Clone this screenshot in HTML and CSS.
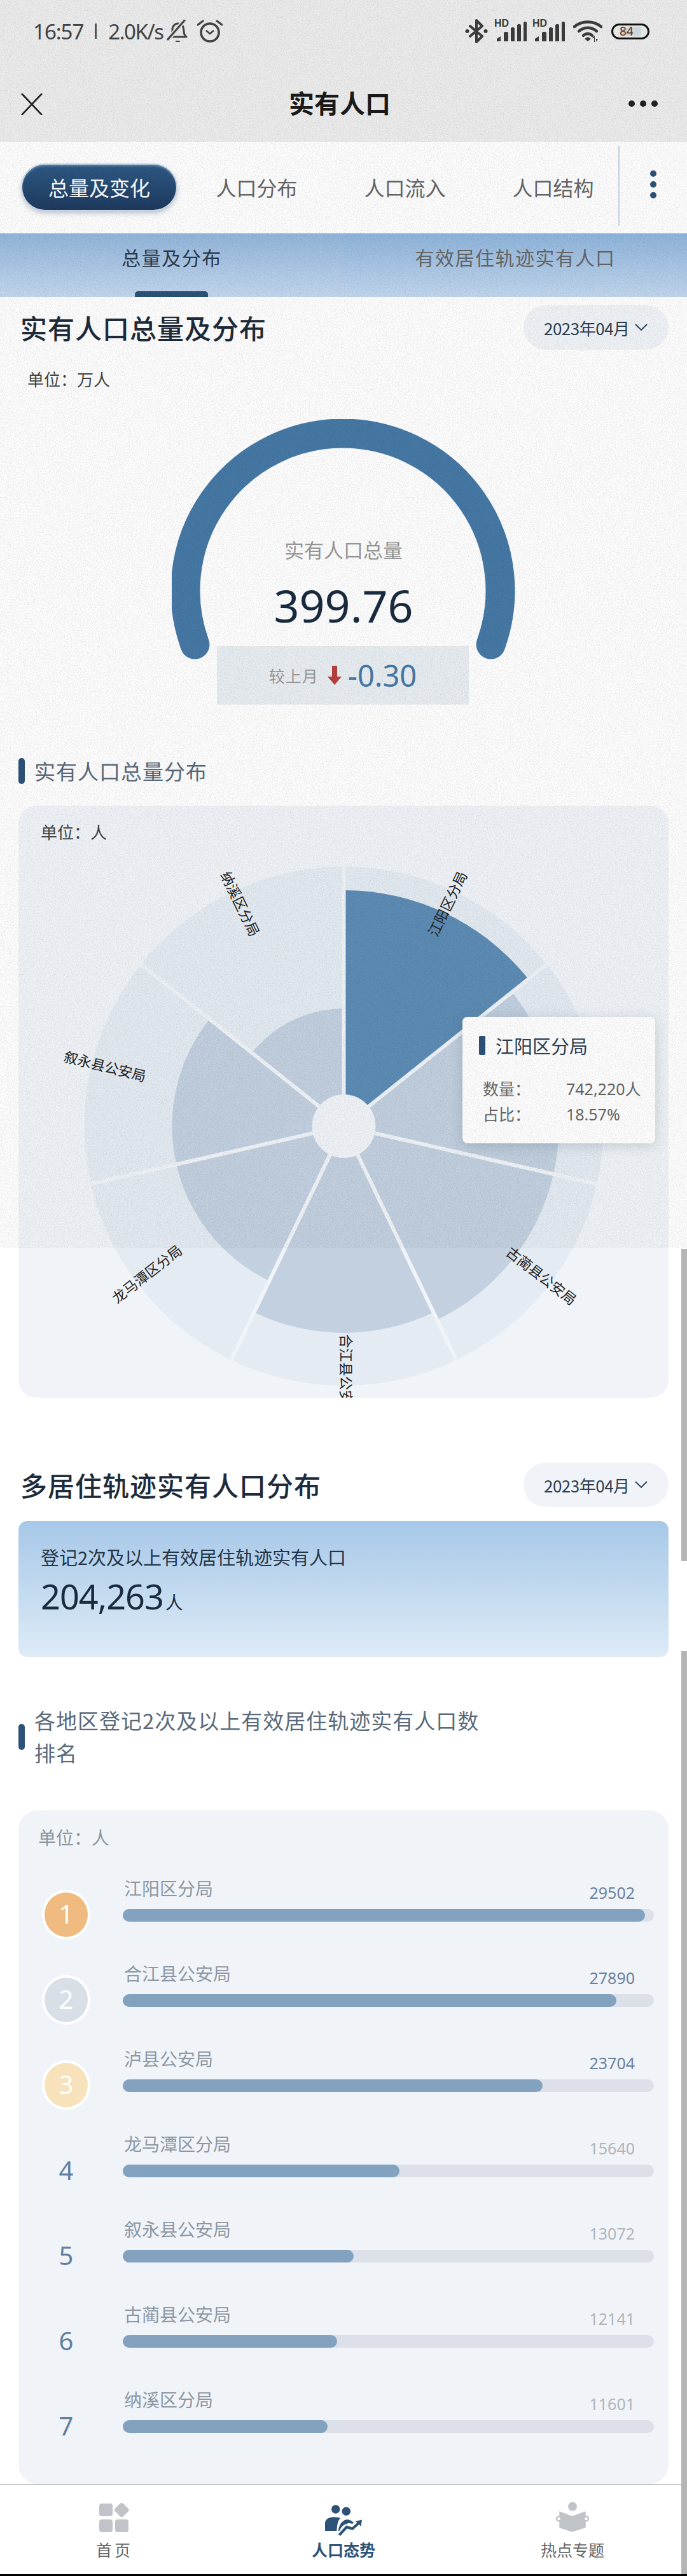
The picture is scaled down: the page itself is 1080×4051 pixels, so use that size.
FILE: index.html
```html
<!DOCTYPE html>
<html lang="zh-CN">
<head>
<meta charset="UTF-8" />
<meta name="viewport" content="width=device-width, initial-scale=1" />
<title>实有人口</title>
<link rel="stylesheet" href="styles.css">
</head>
<body>
  <div class="page">
    <div class="top-bar">
      <div class="status">
        <div class="status-left">
          <span class="status-time">16:57</span>
          <span class="status-sep"></span>
          <span class="status-speed">2.0K/s</span>
          <svg class="ic-bell" viewBox="0 0 34 36"><path d="M6 27c3-3 3-6 3-11 0-6 4-10 9-10 4 0 7 2 8 6l1 5c0 5 1 8 4 10z" fill="none" stroke="#444" stroke-width="3" stroke-linejoin="round"/><path d="M2 31 L28 1" stroke="#e6e6e6" stroke-width="7"/><path d="M1 32 L29 0" stroke="#444" stroke-width="3"/><path d="M13 33h9l-2 2h-5z" fill="#444"/></svg>
          <svg class="ic-alarm" viewBox="0 0 40 36"><circle cx="20" cy="20" r="14" fill="none" stroke="#444" stroke-width="3.6"/><path d="M14 17l6 5 6-5" fill="none" stroke="#444" stroke-width="2.6"/><path d="M1 8 L9 2 M39 8 L31 2" stroke="#444" stroke-width="3.2" stroke-linecap="round"/></svg>
        </div>
        <div class="status-right">
          <svg class="ic-bt" viewBox="0 0 36 38"><path d="M8 11 L27 27 L18 36 V2 L27 11 L8 27" fill="none" stroke="#3c3c3c" stroke-width="4" stroke-linejoin="round" stroke-linecap="round"/><circle cx="3.500" cy="19" r="3" fill="#3c3c3c"/><circle cx="32.500" cy="19" r="3" fill="#3c3c3c"/></svg>
          <div class="signal">
            <span class="signal-hd">HD</span>
            <svg class="signal-bars" viewBox="0 0 48 32"><path d="M1 31v-4l6-4v8zM12 31V18c0-1 1-2 2-2h3c1 0 2 1 2 2v13zM23 31V11c0-1 1-2 2-2h2c1 0 2 1 2 2v20zM33 31V6c0-1 1-2 2-2h2c1 0 2 1 2 2v25zM43 31V2c0-1 1-2 2-2h1c1 0 2 1 2 2v29z" fill="#3c3c3c"/></svg>
          </div>
          <div class="signal">
            <span class="signal-hd">HD</span>
            <svg class="signal-bars" viewBox="0 0 48 32"><path d="M1 31v-4l6-4v8zM12 31V18c0-1 1-2 2-2h3c1 0 2 1 2 2v13zM23 31V11c0-1 1-2 2-2h2c1 0 2 1 2 2v20zM33 31V6c0-1 1-2 2-2h2c1 0 2 1 2 2v25zM43 31V2c0-1 1-2 2-2h1c1 0 2 1 2 2v29z" fill="#3c3c3c"/></svg>
          </div>
          <svg class="ic-wifi" viewBox="0 0 46 36"><path d="M2 11C14 1 32 1 44 11" fill="none" stroke="#3c3c3c" stroke-width="4.500" stroke-linecap="round"/><path d="M9 18C17 11 29 11 37 18" fill="none" stroke="#3c3c3c" stroke-width="4.500" stroke-linecap="round"/><path d="M16 25C20 21 26 21 30 25" fill="none" stroke="#3c3c3c" stroke-width="4.500" stroke-linecap="round"/><path d="M18 30l5-3 5 3-5 4z" fill="#3c3c3c"/><path d="M33 35v-6h-3l4-4v10zM36 24v6h3l-3 5z M38 24v11" fill="#3c3c3c"/></svg>
          <div class="battery"><span class="battery-fill">84</span></div>
        </div>
      </div>
      <div class="title-bar">
        <svg class="ic-close" viewBox="0 0 34 34"><path d="M1 0 L33 34 M33 0 L1 34" stroke="#222" stroke-width="2.600"/></svg>
        <h1 class="page-title">实有人口</h1>
        <div class="more-dots"><i></i><i></i><i></i></div>
      </div>
    </div>

    <nav class="main-tabs">
      <a class="main-tab active">总量及变化</a>
      <a class="main-tab">人口分布</a>
      <a class="main-tab">人口流入</a>
      <a class="main-tab">人口结构</a>
      <div class="main-tabs-more"><i></i><i></i><i></i></div>
    </nav>

    <div class="sub-tabs">
      <div class="sub-tab active">总量及分布</div>
      <div class="sub-tab">有效居住轨迹实有人口</div>
    </div>

    <section class="section-one">
      <div class="section-head">
        <h2>实有人口总量及分布</h2>
        <div class="date-pill">2023年04月<svg viewBox="0 0 20 12"><path d="M1 1l9 9 9-9" fill="none" stroke="#2c3e50" stroke-width="1.800"/></svg></div>
      </div>
      <div class="unit-line">单位：万人</div>

      <div class="gauge">
        <svg class="gauge-arc" viewBox="0 0 540 380"><path d="M36.400 354.600 A247.500 247.500 0 1 1 501.600 354.600" fill="none" stroke="#4679a6" stroke-width="46" stroke-linecap="round"/></svg>
        <div class="gauge-label">实有人口总量</div>
        <div class="gauge-value">399.76</div>
        <div class="gauge-compare">
          <span class="compare-label">较上月</span>
          <svg class="compare-arrow" viewBox="0 0 22 30"><path d="M7 0h8v17h7L11 30 0 17h7z" fill="#b9403f"/></svg>
          <span class="compare-value">-0.30</span>
        </div>
      </div>

      <div class="sub-head"><i></i><span>实有人口总量分布</span></div>

      <div class="rose-card">
        <div class="rose-unit">单位：人</div>
        <svg class="rose" viewBox="0 0 1022 931">
          <g transform="translate(511.500 504)">
            <circle r="408" fill="#e4ebf2"/>
            <path d="M0 0V-371A371 371 0 0 1 290.100 -231.300Z" fill="#5d8cb5"/>
            <path d="M0 0L264.300 -210.700A338 338 0 0 1 329.500 75.200Z" fill="#c2d0e0"/>
            <path d="M0 0L329.500 75.200A338 338 0 0 1 146.700 304.500Z" fill="#c2d0e0"/>
            <path d="M0 0L141 292.800A325 325 0 0 1 -141 292.800Z" fill="#c2d0e0"/>
            <path d="M0 0L-117.100 243.300A270 270 0 0 1 -263.200 60.100Z" fill="#c2d0e0"/>
            <path d="M0 0L-263.200 60.100A270 270 0 0 1 -211.100 -168.300Z" fill="#c2d0e0"/>
            <path d="M0 0L-144.600 -115.300A185 185 0 0 1 0 -185Z" fill="#c2d0e0"/>
            <g stroke="#f0f4f8" stroke-width="6">
              <path d="M0 0L0 -408"/>
              <path d="M0 0L319 -254.400"/>
              <path d="M0 0L397.800 90.800"/>
              <path d="M0 0L177 367.600"/>
              <path d="M0 0L-177 367.600"/>
              <path d="M0 0L-397.800 90.800"/>
              <path d="M0 0L-319 -254.400"/>
            </g>
            <circle r="50" fill="#f0f4f8"/>
          </g>
          <g class="rose-labels" text-anchor="middle">
            <text transform="translate(682 158) rotate(-64)">江阳区分局</text>
            <text transform="translate(341 158) rotate(64)">纳溪区分局</text>
            <text transform="translate(134 418) rotate(14)">叙永县公安局</text>
            <text transform="translate(207 743) rotate(-38)">龙马潭区分局</text>
            <text transform="translate(817 746) rotate(38)">古蔺县公安局</text>
            <text transform="translate(507 897) rotate(90)">合江县公安局</text>
          </g>
        </svg>
        <div class="rose-tip">
          <div class="tip-title"><i></i>江阳区分局</div>
          <div class="tip-row"><span>数量：</span><span>742,220人</span></div>
          <div class="tip-row"><span>占比：</span><span>18.57%</span></div>
        </div>
      </div>
    </section>

    <section class="section-two">
      <div class="section-head">
        <h2>多居住轨迹实有人口分布</h2>
        <div class="date-pill">2023年04月<svg viewBox="0 0 20 12"><path d="M1 1l9 9 9-9" fill="none" stroke="#2c3e50" stroke-width="1.800"/></svg></div>
      </div>
      <div class="total-card">
        <div class="total-label">登记2次及以上有效居住轨迹实有人口</div>
        <div class="total-value">204,263<span>人</span></div>
      </div>

      <div class="sub-head sub-head-wrap"><i></i><span>各地区登记2次及以上有效居住轨迹实有人口数排名</span></div>

      <div class="rank-card">
        <div class="rank-unit">单位：人</div>
        <div class="rank-row">
          <div class="rank-badge gold">1</div>
          <div class="rank-main">
            <div class="rank-text"><span>江阳区分局</span><b class="top">29502</b></div>
            <div class="rank-track"><div class="rank-fill" style="width:98.3%"></div></div>
          </div>
        </div>
        <div class="rank-row">
          <div class="rank-badge silver">2</div>
          <div class="rank-main">
            <div class="rank-text"><span>合江县公安局</span><b class="top">27890</b></div>
            <div class="rank-track"><div class="rank-fill" style="width:92.9%"></div></div>
          </div>
        </div>
        <div class="rank-row">
          <div class="rank-badge bronze">3</div>
          <div class="rank-main">
            <div class="rank-text"><span>泸县公安局</span><b class="top">23704</b></div>
            <div class="rank-track"><div class="rank-fill" style="width:79%"></div></div>
          </div>
        </div>
        <div class="rank-row">
          <div class="rank-badge">4</div>
          <div class="rank-main">
            <div class="rank-text"><span>龙马潭区分局</span><b>15640</b></div>
            <div class="rank-track"><div class="rank-fill" style="width:52.1%"></div></div>
          </div>
        </div>
        <div class="rank-row">
          <div class="rank-badge">5</div>
          <div class="rank-main">
            <div class="rank-text"><span>叙永县公安局</span><b>13072</b></div>
            <div class="rank-track"><div class="rank-fill" style="width:43.5%"></div></div>
          </div>
        </div>
        <div class="rank-row">
          <div class="rank-badge">6</div>
          <div class="rank-main">
            <div class="rank-text"><span>古蔺县公安局</span><b>12141</b></div>
            <div class="rank-track"><div class="rank-fill" style="width:40.4%"></div></div>
          </div>
        </div>
        <div class="rank-row">
          <div class="rank-badge">7</div>
          <div class="rank-main">
            <div class="rank-text"><span>纳溪区分局</span><b>11601</b></div>
            <div class="rank-track"><div class="rank-fill" style="width:38.6%"></div></div>
          </div>
        </div>
      </div>
    </section>

    <footer class="bottom-nav">
      <div class="nav-item">
        <svg viewBox="0 0 50 50"><g fill="#c0c4c9"><rect x="1" y="2" width="21" height="20" rx="4"/><rect x="27.300" y="3.200" width="18" height="18" rx="4" transform="rotate(45 36.300 12.200)"/><rect x="1" y="27" width="21" height="20" rx="4"/><rect x="26" y="27" width="21" height="20" rx="4"/></g></svg>
        <span>首页</span>
      </div>
      <div class="nav-item active">
        <svg viewBox="0 0 60 50"><g fill="#2c5278"><circle cx="17.700" cy="11" r="6.700"/><circle cx="34.300" cy="14.300" r="6.700"/><path d="M1 45V33C1 27 7 23.300 15 23.300C19 23.300 23 24 25 25C21 29 20 36 19.300 45Z"/><path d="M21.700 45C23 38 25 33 28.300 30.700C31 28 34 27 36.700 27.300C40 27.500 43 29.500 46 32L44 34C41 33 39 32.800 36.700 33.300C33 34.300 30 36 28 38C26 40.500 24.500 43 23.500 45Z"/><path d="M23.300 51.700L35 39L44 41.700L53.300 33.300" fill="none" stroke="#2c5278" stroke-width="4.200"/><path d="M49 30L59 27.500L57.500 38Z"/></g></svg>
        <span>人口态势</span>
      </div>
      <div class="nav-item">
        <svg viewBox="0 0 50 50"><g fill="#c0c4c9"><circle cx="25" cy="6.700" r="7"/><path d="M4.300 14.300L24.300 21.700L45.700 14.300V40L24.300 46.700L4.300 40Z"/></g><circle cx="3.500" cy="26" r="3.500" fill="#fff" stroke="#c0c4c9" stroke-width="2.500"/><circle cx="46.500" cy="26" r="3.500" fill="#fff" stroke="#c0c4c9" stroke-width="2.500"/></svg>
        <span>热点专题</span>
      </div>
    </footer>

    <!-- stitched screenshot: upper part is grainy and tinted, scrollbar pieces on the edge -->
    <svg class="tint" width="1080" height="1963">
      <filter id="grain" x="0" y="0" width="100%" height="100%">
        <feTurbulence type="fractalNoise" baseFrequency="0.8" numOctaves="2" seed="4"/>
        <feColorMatrix values="0 0 0 0 0  0 0 0 0 0  0 0 0 0 0  0.22 0 0 0 -0.08"/>
      </filter>
      <rect width="1080" height="1963" filter="url(#grain)"/>
    </svg>
    <div class="scroll-thumb thumb-a"></div>
    <div class="scroll-thumb thumb-b"></div>
    <div class="bottom-edge"></div>
  </div>
</body>
</html>
```
FILE: styles.css
```css
/* Reset & base */
* {
  box-sizing: border-box;
}
html, body {
  margin: 0;
  padding: 0;
  background: #fff;
}
body {
  font-family: "Noto Sans CJK SC", "Noto Sans", sans-serif;
  color: #333;
}
h1, h2 {
  margin: 0;
}

.page {
  position: relative;
  width: 1080px;
  height: 4051px;
  overflow: hidden;
  background: #fff;
}

/* Status + title */
.top-bar {
  height: 223px;
  background: #ededed;
}
.status {
  height: 100px;
  padding: 30px 59px 0 52px;
  display: flex;
  justify-content: space-between;
  align-items: flex-start;
}
.status-left,
.status-right {
  display: flex;
  align-items: center;
  height: 38px;
}
.status-time,
.status-speed {
  font-family: "Noto Sans", sans-serif;
  font-size: 33px;
  color: #444;
  letter-spacing: -1px;
}
.status-speed {
  letter-spacing: -1.5px;
}
.status-sep {
  width: 3px;
  height: 24px;
  margin: 0 18px;
  background: #555;
}
.ic-bell {
  width: 34px;
  height: 36px;
  margin-left: 6px;
}
.ic-alarm {
  width: 40px;
  height: 36px;
  margin-left: 14px;
}
.ic-bt {
  width: 36px;
  height: 38px;
}
.signal {
  position: relative;
  width: 50px;
  height: 34px;
  margin-left: 11px;
}
.signal + .signal {
  margin-left: 10px;
}
.signal-hd {
  position: absolute;
  left: -1px;
  top: -2px;
  font: 700 16px/14px "Liberation Sans", sans-serif;
  color: #3c3c3c;
}
.signal-bars {
  position: absolute;
  right: 0;
  bottom: 0;
  width: 48px;
  height: 32px;
}
.ic-wifi {
  width: 46px;
  height: 36px;
  margin-left: 13px;
}
.battery {
  width: 60px;
  height: 25px;
  margin-left: 14px;
  padding: 3px 10px;
  border: 3px solid #111;
  border-radius: 13px;
}
.battery-fill {
  display: block;
  height: 13px;
  font: 19px/13px "Noto Sans", sans-serif;
  color: #443;
  text-align: left;
  background: linear-gradient(90deg, #e8cfd4, #dcd8dc 60%, #c9e2ea);
}

.title-bar {
  position: relative;
  height: 123px;
  padding: 0 46px 0 33px;
  display: flex;
  align-items: flex-start;
  justify-content: space-between;
}
.ic-close {
  width: 34px;
  height: 34px;
  margin-top: 47px;
}
.page-title {
  position: absolute;
  left: 0;
  right: 12px;
  top: 36px;
  text-align: center;
  font-size: 40px;
  line-height: 50px;
  font-weight: 700;
  color: #1a1a1a;
}
.more-dots {
  display: flex;
  gap: 8px;
  margin-top: 58px;
}
.more-dots i {
  width: 10px;
  height: 10px;
  border-radius: 50%;
  background: #222;
}

/* Main tabs */
.main-tabs {
  position: relative;
  height: 144px;
  padding: 36px 0 0 35px;
  display: flex;
  background: #fff;
}
.main-tab {
  width: 233px;
  height: 71px;
  text-align: center;
  font-size: 32px;
  line-height: 70px;
  color: #666;
}
.main-tab:nth-child(2) {
  margin-left: 10px;
}
.main-tab.active {
  width: 242px;
  border-radius: 36px;
  color: #fff;
  background: linear-gradient(180deg, #2f5a85, #1e3a60);
  box-shadow: inset 0 3px 2px rgba(110, 160, 205, 0.45), 0 0 0 2px #cfdbe6, 0 4px 10px rgba(44, 82, 120, 0.4);
}
.main-tabs-more {
  position: absolute;
  top: 7px;
  left: 972px;
  width: 108px;
  height: 125px;
  padding-top: 38px;
  border-left: 2px solid #c9d8e8;
  display: flex;
  flex-direction: column;
  align-items: center;
  gap: 7px;
}
.main-tabs-more i {
  width: 10px;
  height: 10px;
  border-radius: 50%;
  background: #2c5278;
}

/* Sub tabs */
.sub-tabs {
  height: 100px;
  display: flex;
  background: linear-gradient(180deg, #8fb5dd, #c2d8ef);
}
.sub-tab {
  position: relative;
  width: 540px;
  padding-top: 15px;
  text-align: center;
  font-size: 30px;
  line-height: 44px;
  letter-spacing: 1.5px;
  color: #666;
}
.sub-tab.active {
  color: #2a3a4c;
  background: linear-gradient(180deg, #93b6dc, #c4d9ef);
}
.sub-tab.active::after {
  content: "";
  position: absolute;
  left: 212px;
  bottom: 0;
  width: 115px;
  height: 9px;
  border-radius: 5px 5px 0 0;
  background: #2c5278;
}

/* Sections */
.section-one {
  height: 1833px;
  padding: 13px 29px 0;
}
.section-two {
  padding: 0 29px;
}
.section-head {
  display: flex;
  justify-content: space-between;
  align-items: center;
  height: 70px;
}
.section-head h2 {
  padding-left: 3px;
  font-size: 42px;
  line-height: 50px;
  font-weight: 500;
  letter-spacing: 1px;
  color: #1e2b3a;
}
.date-pill {
  display: flex;
  align-items: center;
  gap: 8px;
  width: 228px;
  height: 70px;
  padding-left: 32px;
  border-radius: 35px;
  font-size: 26px;
  letter-spacing: -0.5px;
  color: #2c3e50;
  background: #f0f4f8;
}
.date-pill svg {
  width: 20px;
  height: 12px;
}
.unit-line {
  margin: 28px 0 0 14px;
  font-size: 26px;
  line-height: 36px;
  color: #444;
}

/* Gauge */
.gauge {
  position: relative;
  height: 533px;
  margin: 45px auto 0;
  width: 540px;
}
.gauge-arc {
  position: absolute;
  left: 0;
  top: 0;
  width: 540px;
  height: 380px;
}
.gauge-label {
  position: relative;
  padding-top: 183px;
  text-align: center;
  font-size: 31px;
  line-height: 44px;
  color: #999;
}
.gauge-value {
  position: relative;
  margin-top: 26px;
  text-align: center;
  font-family: "Noto Sans", sans-serif;
  font-size: 70px;
  line-height: 80px;
  color: #1a2b3f;
}
.gauge-compare {
  position: absolute;
  left: 71px;
  top: 357px;
  width: 396px;
  height: 92px;
  display: flex;
  align-items: center;
  justify-content: center;
  background: #e9eef3;
}
.compare-label {
  font-size: 25px;
  letter-spacing: 1px;
  color: #999;
}
.compare-arrow {
  width: 22px;
  height: 30px;
  margin: 0 10px 0 14px;
}
.compare-value {
  font-family: "Noto Sans", sans-serif;
  font-size: 47px;
  line-height: 60px;
  color: #4679a6;
}

/* Section sub heading */
.sub-head {
  display: flex;
  align-items: center;
  gap: 15px;
  height: 41px;
}
.sub-head i {
  flex: none;
  width: 10px;
  height: 41px;
  border-radius: 5px;
  background: #2c5278;
}
.sub-head span {
  font-size: 33px;
  line-height: 51px;
  letter-spacing: 1px;
  color: #5a6a7a;
}
.sub-head-wrap {
  height: 102px;
  margin-top: 74px;
}
.sub-head-wrap span {
  width: 715px;
}

/* Rose chart */
.rose-card {
  position: relative;
  height: 931px;
  margin-top: 34px;
  overflow: hidden;
  border-radius: 28px;
  background: #f0f4f8;
}
.rose-unit {
  position: absolute;
  left: 35px;
  top: 23px;
  font-size: 26px;
  line-height: 36px;
  color: #444;
}
.rose {
  display: block;
  width: 1022px;
  height: 931px;
}
.rose-labels {
  font-size: 22px;
  fill: #222;
}
.rose-tip {
  position: absolute;
  left: 698px;
  top: 332px;
  width: 303px;
  height: 199px;
  padding: 27px 10px 0 26px;
  border-radius: 8px;
  background: #fff;
  box-shadow: 0 4px 20px rgba(60, 80, 100, 0.22);
}
.tip-title {
  display: flex;
  align-items: center;
  gap: 16px;
  height: 36px;
  font-size: 29px;
  color: #2c3e50;
}
.tip-title i {
  width: 10px;
  height: 30px;
  border-radius: 2px;
  background: #2c5278;
}
.tip-row {
  display: flex;
  font-family: "Noto Sans", "Noto Sans CJK SC", sans-serif;
  font-size: 25px;
  line-height: 40px;
  white-space: nowrap;
  color: #666;
}
.tip-title + .tip-row {
  margin-top: 30px;
}
.tip-row span:first-child {
  flex: none;
  width: 137px;
  padding-left: 6px;
}

/* Total card */
.total-card {
  height: 214px;
  margin-top: 22px;
  padding: 36px 35px 0;
  border-radius: 14px;
  background: linear-gradient(180deg, #a6c8e8, #deebf7);
}
.total-label {
  font-size: 29px;
  line-height: 40px;
  color: #243447;
}
.total-value {
  margin-top: 7px;
  font-family: "Noto Sans", sans-serif;
  font-size: 54px;
  line-height: 70px;
  letter-spacing: -1px;
  color: #1a2b3f;
}
.total-value span {
  margin-left: 3px;
  font-family: "Noto Sans CJK SC", sans-serif;
  font-size: 28px;
}

/* Ranking */
.rank-card {
  height: 1059px;
  margin-top: 65px;
  padding: 18px 23px 0 37px;
  border-radius: 30px;
  background: #f0f4f8;
}
.rank-unit {
  margin-bottom: 29px;
  margin-left: -6px;
  font-size: 28px;
  line-height: 48px;
  color: #8a95a0;
}
.rank-row {
  display: grid;
  grid-template-columns: 76px 1fr;
  column-gap: 51px;
  height: 134px;
}
.rank-badge {
  align-self: end;
  width: 76px;
  height: 78px;
  margin-bottom: 26px;
  text-align: center;
  font-family: "Noto Sans", sans-serif;
  font-size: 40px;
  line-height: 78px;
  color: #5f7f9f;
}
.rank-badge.gold,
.rank-badge.silver,
.rank-badge.bronze {
  border: 4px solid #fff;
  border-radius: 50%;
  line-height: 68px;
  color: #fff;
}
.rank-badge.gold {
  background: #f0bb80;
}
.rank-badge.silver {
  background: #d9dfe7;
}
.rank-badge.bronze {
  background: #f8e2bb;
}
.rank-text {
  display: flex;
  justify-content: space-between;
  align-items: center;
  height: 60px;
  padding: 0 30px 0 2px;
}
.rank-text span {
  font-size: 28px;
  line-height: 40px;
  margin-top: -6px;
  color: #8c97a3;
}
.rank-text b {
  margin-top: 8px;
  font-family: "Noto Sans", sans-serif;
  font-size: 25px;
  font-weight: 400;
  color: #b0b4bb;
}
.rank-text b.top {
  color: #6b829c;
}
.rank-track {
  height: 20px;
  border-radius: 10px;
  background: #dce1e9;
}
.rank-fill {
  height: 20px;
  border-radius: 10px;
  background: #82a2bf;
}

/* Bottom nav */
.bottom-nav {
  position: absolute;
  left: 0;
  right: 0;
  top: 3906px;
  height: 142px;
  display: flex;
  border-top: 2px solid #c8c8c8;
  background: #fff;
}
.nav-item {
  flex: 1;
  display: flex;
  flex-direction: column;
  align-items: center;
  padding-top: 27px;
  font-size: 25px;
  line-height: 40px;
  color: #666;
}
.nav-item svg {
  width: 50px;
  height: 50px;
  margin-bottom: 4px;
  overflow: visible;
}
.nav-item:first-child span {
  letter-spacing: 4px;
}
.nav-item.active svg {
  width: 60px;
}
.nav-item.active {
  font-weight: 700;
  color: #2c5278;
}

/* Screenshot artefacts */
.tint {
  position: absolute;
  left: 0;
  top: 0;
  pointer-events: none;
}
.scroll-thumb {
  position: absolute;
  right: 0;
  width: 9px;
  background: #b5b5b5;
}
.thumb-a {
  top: 1964px;
  height: 491px;
}
.thumb-b {
  top: 2596px;
  height: 1452px;
}
.bottom-edge {
  position: absolute;
  left: 0;
  right: 0;
  bottom: 0;
  height: 3px;
  background: #000;
}
```
